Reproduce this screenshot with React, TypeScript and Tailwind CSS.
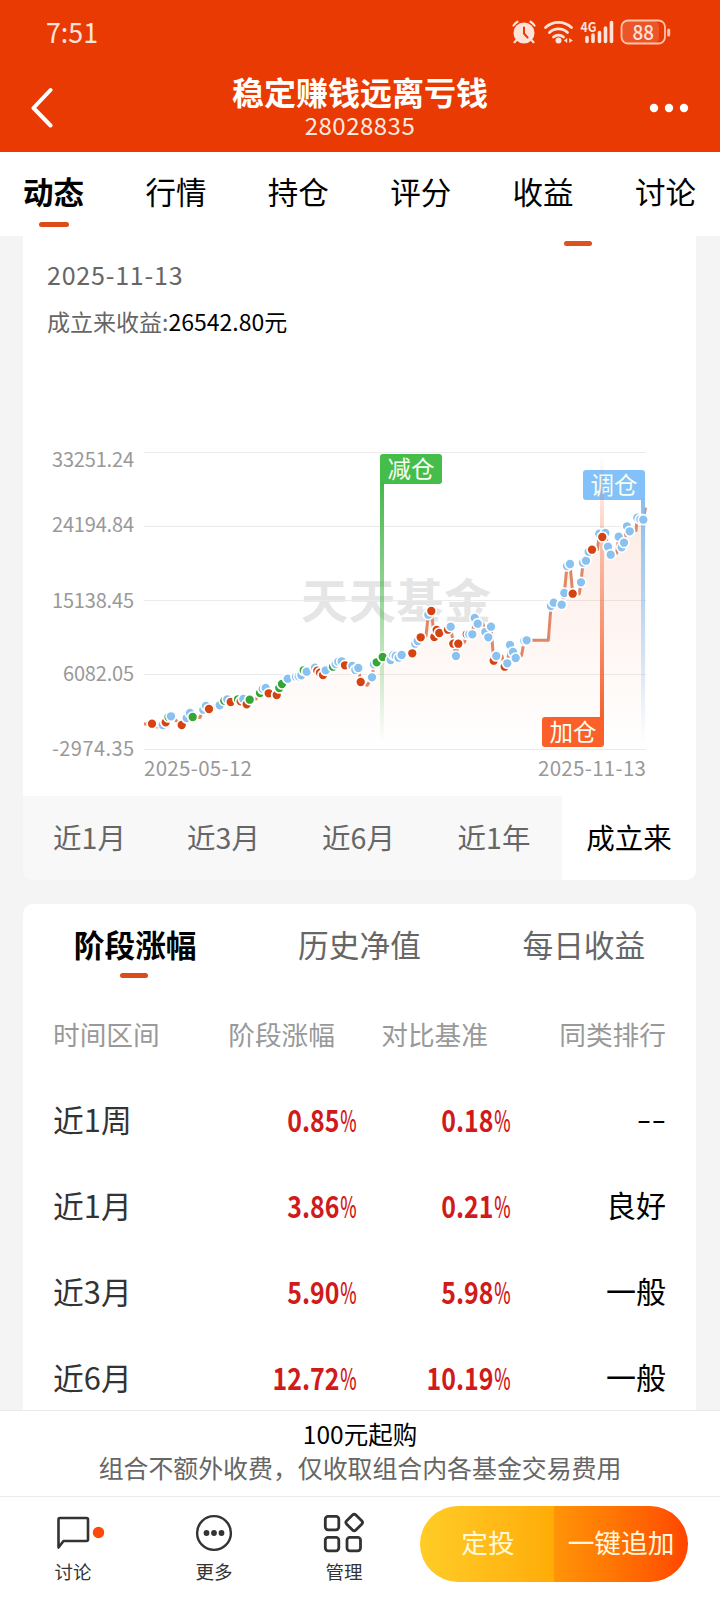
import React from "react";

type Kind = "b" | "r" | "g";
type Point = [number, number, Kind | "n"];

const FONT = "font-['Noto_Sans_CJK_SC',sans-serif]";

const points: Point[] = [
  [144, 724, "n"], [152, 723.7, "r"], [157, 727, "n"], [162.7, 725, "b"], [165.7, 722.3, "r"], [168.5, 717, "g"], [171, 716.3, "b"],
  [176, 720.5, "n"], [181.7, 725, "r"], [186.7, 718, "b"], [190, 713, "b"], [192.7, 717, "g"], [200, 717.5, "n"], [203.3, 709.7, "b"],
  [206, 706, "b"], [209, 709, "r"], [219.7, 705.3, "b"], [224.3, 700.7, "g"], [227.3, 699.3, "b"], [230.7, 702, "r"],
  [238, 699.3, "g"], [240.7, 701.3, "r"], [243.3, 699, "b"], [246.7, 704.3, "r"], [249.7, 699.7, "g"], [256, 699, "n"],
  [260, 693, "g"], [262.7, 689, "b"], [265.7, 688, "b"], [268.7, 693.3, "r"], [276.7, 695, "r"], [279.3, 688, "g"],
  [282, 684, "g"], [287.7, 678.7, "b"], [296, 676.7, "b"], [298.7, 676.3, "b"], [301.3, 675.3, "b"], [303.7, 670.3, "g"],
  [306.7, 671.7, "b"], [315, 667.7, "b"], [317.3, 670.7, "r"], [320, 672.7, "r"], [323, 675, "r"], [325.7, 670.3, "b"],
  [333, 666.7, "g"], [335.7, 664, "b"], [338.3, 661.7, "b"], [341.7, 661.3, "b"], [345, 665.3, "r"], [352.3, 666, "b"],
  [355.3, 670, "b"], [358.3, 668, "b"], [360.7, 682, "r"], [367.3, 685.3, "n"], [372, 677.3, "b"], [374, 664.3, "b"],
  [376.7, 662.3, "g"], [382.7, 657, "g"], [390.7, 660, "b"], [393.3, 655, "b"], [395.7, 656, "b"], [398.7, 657.7, "b"],
  [401.7, 655, "b"], [412.3, 653.3, "r"], [415.3, 643.7, "b"], [417.7, 641, "b"], [420.7, 637.3, "r"], [426, 636, "n"],
  [428.3, 614.7, "b"], [431.3, 611, "r"], [434.3, 637, "r"], [436.7, 630, "r"], [439.3, 633, "r"], [448, 629.7, "r"],
  [450.7, 626.7, "b"], [453.3, 643.7, "r"], [456, 656, "b"], [458.3, 643.7, "r"], [464.5, 642, "n"], [466.7, 634.3, "r"],
  [469.3, 634.3, "b"], [472.3, 634.3, "b"], [474.7, 618, "b"], [477.7, 623.7, "b"], [483, 624, "n"], [485.3, 632, "b"],
  [488.3, 637.3, "b"], [491, 626.7, "b"], [493.7, 660.7, "r"], [496.3, 656, "b"], [502, 656, "n"], [504.7, 666.7, "r"],
  [507.3, 663.3, "b"], [510, 645, "b"], [513, 652, "b"], [515.7, 658, "b"], [521.5, 655.5, "n"], [524.3, 640.7, "b"],
  [526.7, 640.3, "b"], [548.3, 640.3, "n"], [551, 606, "b"], [553.7, 602.7, "b"], [561.7, 604.7, "b"], [564.3, 593, "b"],
  [567, 566, "b"], [570, 564, "b"], [572.7, 593.7, "r"], [579.3, 593.7, "n"], [581, 582.3, "b"], [583, 562.7, "b"],
  [586, 560.7, "b"], [588.7, 551.7, "b"], [592, 549.7, "r"], [597.5, 549.5, "n"], [599.3, 533.7, "b"], [605.3, 533, "b"],
  [602.3, 537, "r"], [608, 546.7, "b"], [610.7, 554.7, "b"], [616.7, 553, "n"], [618.7, 536.7, "b"], [621.7, 547.3, "b"],
  [624, 542.7, "b"], [627, 526.3, "b"], [629.7, 531.3, "b"], [636, 530.5, "n"], [637.3, 517.7, "b"], [640.3, 519.3, "b"],
  [643.3, 519.7, "b"], [645.5, 507.5, "n"],
];

const dotColor: Record<Kind, string> = { b: "#89c2f1", r: "#d54310", g: "#33a633" };
const line = [...points].sort((a, b) => a[0] - b[0]).map(([x, y]) => `${x},${y}`).join(" ");

const axis: [string, number, number, number][] = [
  ["33251.24", 459.5, 52, 82], ["24194.84", 524.5, 52, 82], ["15138.45", 600, 52, 82], ["6082.05", 673.5, 63, 71], ["-2974.35", 748, 52, 82],
];

function Flag({ x, y, color, label }: { x: number; y: number; color: string; label: string }) {
  return (
    <g>
      <rect x={x} y={y} width="62" height="30" rx="3" fill={color} />
      <text x={x + 31} y={y + 24} textAnchor="middle" fontSize="23.5" fill="#f6fff2">{label}</text>
    </g>
  );
}

function Chart() {
  return (
    <svg width="673" height="356" viewBox="23 440 673 356" className="block">
      <defs>
        <linearGradient id="area" gradientUnits="userSpaceOnUse" x1="0" y1="500" x2="0" y2="748">
          <stop offset="0" stopColor="#f06030" stopOpacity=".13" />
          <stop offset="1" stopColor="#f06030" stopOpacity="0" />
        </linearGradient>
        <linearGradient id="down-green" x1="0" y1="0" x2="0" y2="1">
          <stop offset="0" stopColor="#45b649" /><stop offset="1" stopColor="#45b649" stopOpacity="0" />
        </linearGradient>
        <linearGradient id="down-blue" x1="0" y1="0" x2="0" y2="1">
          <stop offset="0" stopColor="#86bdf0" /><stop offset="1" stopColor="#86bdf0" stopOpacity="0" />
        </linearGradient>
        <linearGradient id="up-red" x1="0" y1="1" x2="0" y2="0">
          <stop offset="0" stopColor="#f4602c" /><stop offset="1" stopColor="#f4602c" stopOpacity="0" />
        </linearGradient>
      </defs>
      <text x="301" y="618" fontSize="47" fontWeight="700" fill="#e5e5e5" textLength="190">天天基金</text>
      {[452.5, 526.5, 600.5, 674.5, 749.5].map((y) => (
        <line key={y} x1="144" x2="646" y1={y} y2={y} stroke="#ebebeb" />
      ))}
      <polygon points={`144,749 ${line} 645.5,749`} fill="url(#area)" />
      <polyline points={line} fill="none" stroke="#e08767" strokeWidth="3" strokeLinejoin="round" />
      <Flag x={380} y={454} color="#45bd4b" label="减仓" />
      <rect x="380" y="482" width="4" height="260" fill="url(#down-green)" />
      <Flag x={583} y={470} color="#83c1fa" label="调仓" />
      <rect x="641" y="498" width="4" height="244" fill="url(#down-blue)" />
      <Flag x={542} y={717} color="#fb602b" label="加仓" />
      <rect x="600" y="455" width="4" height="264" fill="url(#up-red)" />
      {points.map(([x, y, k], i) =>
        k === "n" ? null : <circle key={i} cx={x} cy={y} r="5" fill={dotColor[k]} stroke="#fff" strokeWidth="1.7" />
      )}
      {axis.map(([t, y, x, w]) => (
        <text key={t} x={x} y={y + 7.5} fontSize="20" fill="#999" textLength={w}>{t}</text>
      ))}
      <text x="144" y="776" fontSize="20.5" fill="#999" textLength="108">2025-05-12</text>
      <text x="538" y="776" fontSize="20.5" fill="#999" textLength="108">2025-11-13</text>
    </svg>
  );
}

function StatusIcons() {
  return (
    <svg width="164" height="32" viewBox="508 16 164 32" fill="none" stroke="#ffe3d8" strokeLinecap="round">
      <circle cx="524" cy="33" r="10.5" fill="#ffe3d8" stroke="none" />
      <path d="M513.5 25.5a12 12 0 0 1 4-3.8M534.5 25.5a12 12 0 0 0-4-3.8M516.5 40l-2 2.2M531.5 40l2 2.2" strokeWidth="2.2" />
      <path d="M524 27.5v6l3.6 4" stroke="#e93a03" strokeWidth="2" />
      <path d="M545.5 27.5a19 19 0 0 1 26 0M549.5 32.5a13 13 0 0 1 18 0M553.5 37a7.5 7.5 0 0 1 10 0" strokeWidth="2.8" />
      <circle cx="558.5" cy="40.5" r="3" fill="#ffe3d8" stroke="none" />
      <path d="M567.2 38v5l-3.2-2.5zM569.2 38v5l3.6-2.5z" fill="#ffe3d8" stroke="none" />
      <text x="580.5" y="31.5" fontSize="13.5" fontWeight="700" fill="#ffe3d8" stroke="none" textLength="16" lengthAdjust="spacingAndGlyphs">4G</text>
      <path d="M587 37.5v4M593 35v6.5M599.5 32.5v9M605.5 28v13.5M611.5 22.5v19" strokeWidth="3.6" />
      <rect x="622" y="21" width="37" height="22" rx="5.5" fill="#ec5527" stroke="none" />
      <rect x="621.5" y="20.5" width="43.5" height="23" rx="6.5" strokeWidth="1.8" stroke="#ffc3ac" />
      <path d="M668.7 30v5" strokeWidth="3" stroke="#ffc3ac" />
      <text x="632.5" y="39.8" fontSize="20.5" fontWeight="500" fill="#ffe3d8" stroke="none" textLength="21.5" lengthAdjust="spacingAndGlyphs">88</text>
    </svg>
  );
}

const sections = ["行情", "持仓", "评分", "收益", "讨论"];
const ranges = ["近1月", "近3月", "近6月", "近1年"];
const rows = [
  ["近1周", "0.85", "0.18", "--"],
  ["近1月", "3.86", "0.21", "良好"],
  ["近3月", "5.90", "5.98", "一般"],
  ["近6月", "12.72", "10.19", "一般"],
];

function Percent({ value }: { value: string }) {
  return (
    <span className="flex origin-right scale-x-[.83] items-baseline justify-end text-[30px] font-bold text-[#d11a1a]">
      {value}
      <span className="ml-[1px] inline-block w-[19px] origin-left scale-x-[.7] font-medium">%</span>
    </span>
  );
}

export default function App() {
  return (
    <div className={`flex h-[1600px] w-[720px] flex-col overflow-hidden bg-[#f4f4f4] text-black ${FONT}`}>
      <header className="h-[152px] shrink-0 bg-[#e93a03] text-white">
        <div className="flex h-16 items-center justify-between pl-[46px] pr-[48px]">
          <span className="origin-left scale-x-[.94] pb-[2px] text-[28.5px] leading-none text-[#ffe3d8]">7:51</span>
          <StatusIcons />
        </div>
        <div className="flex h-[88px] items-center justify-between pl-[30px] pr-[31px]">
          <svg width="24" height="42" viewBox="0 0 24 42" className="mb-[2px]" fill="none" stroke="#fff" strokeWidth="4" strokeLinecap="round" strokeLinejoin="round">
            <path d="M20.5 4L3.5 22L20.5 39.5" />
          </svg>
          <div className="flex flex-col items-center gap-[2px] pb-[7px] pl-[17px]">
            <h1 className="text-[32px] leading-[38px] font-bold">稳定赚钱远离亏钱</h1>
            <p className="text-[24px] leading-[26px] tracking-[.5px] text-[#ffe9df]">28028835</p>
          </div>
          <svg width="40" height="10" viewBox="0 0 40 10" fill="#fff">
            <circle cx="5" cy="5" r="4.2" /><circle cx="20" cy="5" r="4.2" /><circle cx="35" cy="5" r="4.2" />
          </svg>
        </div>
      </header>

      <nav className="flex h-[84px] shrink-0 justify-between bg-white pr-[24px] pl-[23px] pt-5 text-[30.5px] leading-[38px]">
        <div className="flex flex-col items-center gap-3 font-bold">
          动态
          <span className="h-[5px] w-[30px] rounded-full bg-[#dd4b1a]" />
        </div>
        {sections.map((s) => <span key={s}>{s}</span>)}
      </nav>

      <section className="ml-[23px] flex h-[644px] w-[673px] shrink-0 flex-col overflow-hidden rounded-b-[10px] bg-white">
        <div className="flex h-[204px] flex-col px-6">
          <span className="mt-[5px] mr-[80px] h-[5px] w-[28px] shrink-0 self-end rounded-full bg-[#e0501e]" />
          <p className="mt-[11px] text-[25px] leading-[34px] tracking-[.8px] text-[#666]">2025-11-13</p>
          <p className="mt-[15px] text-[23px] leading-[30px] text-[#666]">成立来收益:<span className="text-black">26542.80元</span></p>
        </div>
        <Chart />
        <div className="grid h-[84px] grid-cols-[133px_135px_135px_136px_134px] bg-[#f8f8f8] text-center text-[28.5px] leading-[81px] text-[#666]">
          {ranges.map((r) => <span key={r}>{r}</span>)}
          <span className="bg-white text-black">成立来</span>
        </div>
      </section>

      <section className="mt-6 ml-[23px] flex h-[506px] w-[673px] shrink-0 flex-col overflow-hidden rounded-t-[10px] bg-white">
        <div className="grid h-[88px] shrink-0 grid-cols-3 pt-[21px] text-center text-[30.7px] leading-[38px] text-[#666]">
          <div className="flex flex-col items-center gap-[10px] font-bold text-black">
            阶段涨幅
            <span className="mr-[2px] h-[5px] w-[28px] rounded-full bg-[#dd4b1a]" />
          </div>
          <span>历史净值</span>
          <span>每日收益</span>
        </div>
        <div className="grid h-[84px] shrink-0 grid-cols-[143px_139px_153px_1fr] items-center px-[30px] text-right text-[26.7px] whitespace-nowrap text-[#999]">
          <span className="text-left">时间区间</span>
          <span>阶段涨幅</span>
          <span>对比基准</span>
          <span>同类排行</span>
        </div>
        {rows.map(([label, gain, base, rank]) => (
          <div key={label} className="grid h-[86px] shrink-0 grid-cols-[143px_160px_154px_1fr] items-center px-[30px] text-right text-[30px]">
            <span className="text-left text-[30.8px] text-[#333]">{label}</span>
            <Percent value={gain} />
            <Percent value={base} />
            {rank === "--" ? <span className="origin-right scale-x-[1.4] pb-1">--</span> : <span className="pb-[2px]">{rank}</span>}
          </div>
        ))}
      </section>

      <footer className="flex h-[190px] shrink-0 flex-col bg-white">
        <div className="h-[86px] border-t border-[#ebebeb] pt-[7px] text-center">
          <p className="text-[24.5px] leading-[32px]">100元起购</p>
          <p className="text-[24.9px] leading-[35px] text-[#666]">组合不额外收费，仅收取组合内各基金交易费用</p>
        </div>
        <div className="flex h-[104px] border-t border-[#ebebeb] text-[18.5px] text-[#333]">
          <div className="flex w-[146px] flex-col items-center gap-[5px] pt-[15px]">
            <svg width="50" height="42" viewBox="56 1512 50 42" className="ml-[15px] shrink-0" fill="none" stroke="#333" strokeWidth="2.6" strokeLinejoin="round">
              <path d="M58.5 1547.5V1519.5a1.500 1.500 0 0 1 1.500-1.500h26.500a1.500 1.500 0 0 1 1.500 1.500v20a1.500 1.500 0 0 1-1.500 1.500H63.500z" />
              <circle cx="98.5" cy="1532.5" r="5.7" fill="#fb4a08" stroke="none" />
            </svg>
            <span className="leading-6">讨论</span>
          </div>
          <div className="flex w-[136px] flex-col items-center gap-[5px] pt-[15px]">
            <svg width="40" height="42" viewBox="194 1512 40 42" className="shrink-0" fill="none" stroke="#333" strokeWidth="2.4">
              <circle cx="214" cy="1533" r="16.9" />
              <g fill="#333" stroke="none"><circle cx="206.5" cy="1533" r="2.9" /><circle cx="214" cy="1533" r="2.9" /><circle cx="221.5" cy="1533" r="2.9" /></g>
            </svg>
            <span className="leading-6">更多</span>
          </div>
          <div className="flex w-[124px] flex-col items-center gap-[5px] pt-[15px]">
            <svg width="42" height="42" viewBox="323 1512 42 42" className="shrink-0" fill="none" stroke="#333" strokeWidth="2.8" strokeLinejoin="round">
              <rect x="325.3" y="1516.3" width="13.5" height="13.5" rx="2.8" />
              <rect x="325.3" y="1537.3" width="13.5" height="13.5" rx="2.8" />
              <rect x="347" y="1537.3" width="13.5" height="13.5" rx="2.8" />
              <rect x="347.7" y="1516" width="13" height="13" rx="2.4" transform="rotate(45 354.2 1522.5)" />
            </svg>
            <span className="leading-6">管理</span>
          </div>
          <div className="mt-[9px] ml-[14px] flex h-[76px] w-[268px] overflow-hidden rounded-full text-center text-[26.7px] leading-[71px] text-[#fff8dc]">
            <div className="w-[134px] bg-linear-to-r from-[#ffcc26] to-[#ffac05] pl-[2px]">定投</div>
            <div className="w-[134px] bg-linear-to-r from-[#ff9408] to-[#ff4500]">一键追加</div>
          </div>
        </div>
      </footer>
    </div>
  );
}
